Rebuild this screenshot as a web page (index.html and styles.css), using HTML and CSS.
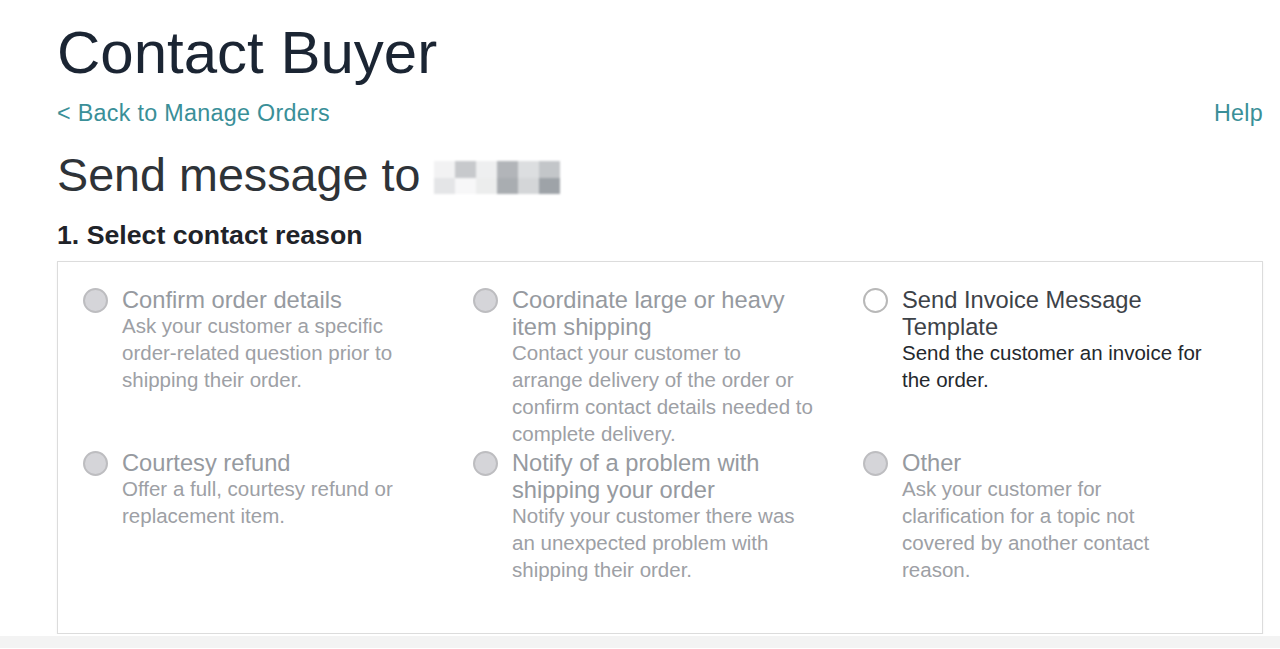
FILE: index.html
```html
<!DOCTYPE html>
<html lang="en">
<head>
<meta charset="utf-8">
<title>Contact Buyer</title>
<link rel="stylesheet" href="styles.css">
</head>
<body>
<div class="page">
  <h1 class="title">Contact Buyer</h1>
  <div class="navrow">
    <a class="link" href="#">&lt; Back to Manage Orders</a>
    <a class="link" href="#">Help</a>
  </div>
  <h2 class="subtitle">Send message to <span class="blurname"><i class="b1"></i><i class="b2"></i><i class="b3"></i><i class="b4"></i><i class="b5"></i><i class="b6"></i><i class="b7"></i><i class="b8"></i><i class="b9"></i><i class="b10"></i><i class="b11"></i><i class="b12"></i></span></h2>
  <h3 class="step">1. Select contact reason</h3>
  <div class="box">
    <div class="grid">
      <label class="opt disabled">
        <span class="radio"></span>
        <span class="text"><span class="otitle">Confirm order details</span><span class="odesc">Ask your customer a specific order-related question prior to shipping their order.</span></span>
      </label>
      <label class="opt disabled">
        <span class="radio"></span>
        <span class="text"><span class="otitle">Coordinate large or heavy item shipping</span><span class="odesc">Contact your customer to arrange delivery of the order or confirm contact details needed to complete delivery.</span></span>
      </label>
      <label class="opt active">
        <span class="radio"></span>
        <span class="text"><span class="otitle">Send Invoice Message Template</span><span class="odesc">Send the customer an invoice for the order.</span></span>
      </label>
      <label class="opt disabled">
        <span class="radio"></span>
        <span class="text"><span class="otitle">Courtesy refund</span><span class="odesc">Offer a full, courtesy refund or replacement item.</span></span>
      </label>
      <label class="opt disabled">
        <span class="radio"></span>
        <span class="text"><span class="otitle">Notify of a problem with shipping your order</span><span class="odesc">Notify your customer there was an unexpected problem with shipping their order.</span></span>
      </label>
      <label class="opt disabled">
        <span class="radio"></span>
        <span class="text"><span class="otitle">Other</span><span class="odesc">Ask your customer for clarification for a topic not covered by another contact reason.</span></span>
      </label>
    </div>
  </div>
</div>
<div class="footerband"></div>
</body>
</html>
```

FILE: styles.css
```css
html, body {
  margin: 0;
  padding: 0;
  background: #ffffff;
  font-family: Arial, "Liberation Sans", Helvetica, sans-serif;
  overflow: hidden;
}

.page {
  width: 1206px;
  margin-left: 57px;
  padding-top: 18px;
}

.title {
  margin: 0;
  font-size: 60px;
  font-weight: 400;
  line-height: 70px;
  color: #1b2533;
}

.navrow {
  display: flex;
  justify-content: space-between;
  align-items: center;
  margin-top: 10px;
  height: 30px;
}

.link {
  color: #3a8f98;
  text-decoration: none;
  font-size: 23.3px;
  line-height: 30px;
  letter-spacing: 0.3px;
}

.subtitle {
  margin: 19px 0 0 0;
  font-size: 46.7px;
  font-weight: 400;
  line-height: 56px;
  color: #2e3338;
  display: flex;
  align-items: center;
}

.blurname {
  display: inline-grid;
  grid-template-columns: repeat(6, 21px);
  grid-template-rows: 17px 16px;
  margin-left: 14px;
  margin-top: 4px;
  filter: blur(1.3px);
}
.blurname i { display: block; }
.b1 { background: #f2f2f3; }
.b2 { background: #c7c9cc; }
.b3 { background: #eeeff0; }
.b4 { background: #b2b5b9; }
.b5 { background: #dcdee0; }
.b6 { background: #c3c6c9; }
.b7 { background: #e4e5e7; }
.b8 { background: #f7f7f8; }
.b9 { background: #eceded; }
.b10 { background: #a9adb1; }
.b11 { background: #d4d6d8; }
.b12 { background: #9ea3a8; }

.step {
  margin: 16px 0 0 0;
  font-size: 26.7px;
  font-weight: 700;
  line-height: 32px;
  color: #1f2329;
}

.box {
  margin-top: 10px;
  border: 1px solid #dcdcdc;
  height: 373px;
  box-sizing: border-box;
  padding: 25px 25px 0 25px;
  box-shadow: 0 1px 2px rgba(0,0,0,0.06);
}

.grid {
  display: grid;
  grid-template-columns: 390px 390px 390px;
  row-gap: 3px;
}

.opt {
  display: flex;
  align-items: flex-start;
  gap: 14px;
}

.radio {
  flex: none;
  width: 21px;
  height: 21px;
  border-radius: 50%;
  border: 2px solid #bdbdc0;
  background: #d5d5d9;
  margin-top: 1px;
}

.active .radio {
  background: #ffffff;
  border-color: #b8b8b8;
}

.text {
  display: flex;
  flex-direction: column;
  width: 303px;
}

.otitle {
  font-size: 23.7px;
  line-height: 27px;
  color: #969aa0;
}

.odesc {
  font-size: 20.5px;
  line-height: 27px;
  margin-top: -2px;
  color: #9da0a5;
}

.active .otitle { color: #3d4248; }
.active .odesc { color: #24282d; }

.footerband {
  position: absolute;
  left: 0;
  right: 0;
  top: 636px;
  height: 12px;
  background: #f3f3f3;
}
```
